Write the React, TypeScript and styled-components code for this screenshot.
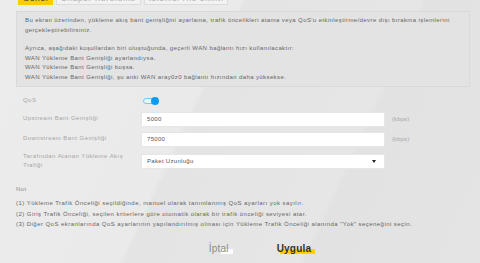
import React from "react";
import styled, { createGlobalStyle } from "styled-components";

const Global = createGlobalStyle`
  html, body { margin: 0; padding: 0; }
  body {
    width: 480px; height: 263px; overflow: hidden;
    font-family: "Liberation Sans", Arial, sans-serif;
    background: linear-gradient(115deg, #ececec 0%, #eaeaea 40%, #e4e4e4 41%, #e6e6e6 70%, #e2e2e2 71%, #e4e4e4 100%);
  }
`;

const Page = styled.div`
  width: 480px;
  height: 263px;
  overflow: hidden;
  padding: 0 10px 0 16px;
  box-sizing: border-box;
`;

const TabBar = styled.div`
  display: flex;
  align-items: flex-end;
  gap: 3px;
  margin-top: -8px;
  height: 13px;
  padding-left: 2px;
`;

const Tab = styled.div<{ $active?: boolean }>`
  height: 13px;
  padding: 0 4px;
  display: flex;
  align-items: center;
  font-size: 8px;
  letter-spacing: 0.8px;
  color: ${(p) => (p.$active ? "#333" : "#aaa")};
  background: ${(p) => (p.$active ? "#ffcc00" : "#f2f2f2")};
  border: 1px solid ${(p) => (p.$active ? "#ffcc00" : "#dcdcdc")};
  box-sizing: border-box;
`;

const InfoBox = styled.div`
  margin-top: 6px;
  background: #e3e3e3;
  border: 1px solid #d9d9d9;
  padding: 4px 8px 3px 8px;
  font-size: 6px;
  letter-spacing: 0.4px;
  line-height: 9.6px;
  color: #666;
`;

const Line = styled.div<{ $gap?: boolean }>`
  margin-top: ${(p) => (p.$gap ? "9px" : "0")};
`;

const Form = styled.div`
  margin-top: 8px;
  padding-left: 7px;
  display: grid;
  grid-template-columns: 111px 244px auto;
  column-gap: 7px;
  row-gap: 5px;
  align-items: center;
`;

const Label = styled.div`
  font-size: 6px;
  letter-spacing: 0.45px;
  line-height: 9.5px;
  color: #a6a6a6;
`;

const Toggle = styled.div`
  position: relative;
  width: 16px;
  height: 8px;
  margin: 2px 0 2px 2px;
`;

const Track = styled.div`
  position: absolute;
  left: 0;
  top: 1px;
  width: 13px;
  height: 6px;
  border-radius: 3px;
  border: 1px solid #7cc8f5;
  background: #e9f5fc;
  box-sizing: border-box;
`;

const Knob = styled.div`
  position: absolute;
  right: 0;
  top: 0;
  width: 8px;
  height: 8px;
  border-radius: 50%;
  background: #0a9cf0;
`;

const Input = styled.div`
  height: 15px;
  background: #fff;
  border: 1px solid #e6e6e6;
  box-sizing: border-box;
  display: flex;
  align-items: center;
  justify-content: space-between;
  padding: 0 8px 0 5px;
  font-size: 6px;
  letter-spacing: 0.3px;
  color: #555;
`;

const Unit = styled.div`
  font-size: 6px;
  letter-spacing: 0.1px;
  color: #a8a8a8;
`;

const Arrow = styled.span`
  width: 0;
  height: 0;
  border-left: 2.5px solid transparent;
  border-right: 2.5px solid transparent;
  border-top: 3px solid #222;
`;

const Notes = styled.div`
  margin-top: 13px;
  font-size: 6px;
  letter-spacing: 0.45px;
  line-height: 10.5px;
  color: #666;
`;

const NoteTitle = styled.div`
  color: #8a8a8a;
  margin-bottom: 4px;
`;

const Buttons = styled.div`
  margin-top: 13px;
  display: flex;
  justify-content: center;
  gap: 46px;
  padding-left: 34px;
`;

const Button = styled.div<{ $primary?: boolean }>`
  position: relative;
  font-size: 10px;
  letter-spacing: 0.2px;
  font-weight: ${(p) => (p.$primary ? 700 : 400)};
  color: ${(p) => (p.$primary ? "#333" : "#8c8c8c")};
  padding: 0 1px;
  &::after {
    content: "";
    position: absolute;
    z-index: -1;
    left: ${(p) => (p.$primary ? "4px" : "13px")};
    right: -3px;
    bottom: 0px;
    height: 5px;
    background: ${(p) => (p.$primary ? "#ffd100" : "#ffffff")};
  }
`;

const ButtonText = styled.span`
  position: relative;
`;

export default function App() {
  return (
    <>
      <Global />
      <Page>
        <TabBar>
          <Tab $active>Genel</Tab>
          <Tab>Shaper Kurulumu</Tab>
          <Tab>İstemci Hız Limiti</Tab>
        </TabBar>
        <InfoBox>
          <Line>
            Bu ekran üzerinden, yükleme akış bant genişliğini ayarlama, trafik öncelikleri atama veya QoS'u etkinleştirme/devre dışı bırakma işlemlerini
          </Line>
          <Line>gerçekleştirebilirsiniz.</Line>
          <Line $gap>
            Ayrıca, aşağıdaki koşullardan biri oluştuğunda, geçerli WAN bağlantı hızı kullanılacaktır:
          </Line>
          <Line>WAN Yükleme Bant Genişliği ayarlandıysa.</Line>
          <Line>WAN Yükleme Bant Genişliği boşsa.</Line>
          <Line>WAN Yükleme Bant Genişliği, şu anki WAN aray0z0 bağlantı hızından daha yüksekse.</Line>
        </InfoBox>
        <Form>
          <Label>QoS</Label>
          <Toggle>
            <Track />
            <Knob />
          </Toggle>
          <span />
          <Label>Upstream Bant Genişliği</Label>
          <Input>5000</Input>
          <Unit>(kbps)</Unit>
          <Label>Downstream Bant Genişliği</Label>
          <Input>75000</Input>
          <Unit>(kbps)</Unit>
          <Label>
            Tarafından Atanan Yükleme Akış
            <br />
            Trafiği
          </Label>
          <Input>
            Paket Uzunluğu
            <Arrow />
          </Input>
          <span />
        </Form>
        <Notes>
          <NoteTitle>Not</NoteTitle>
          <div>(1) Yükleme Trafik Önceliği seçildiğinde, manuel olarak tanımlanmış QoS ayarları yok sayılır.</div>
          <div>(2) Giriş Trafik Önceliği, seçilen kriterlere göre otomatik olarak bir trafik önceliği seviyesi atar.</div>
          <div>(3) Diğer QoS ekranlarında QoS ayarlarının yapılandırılmış olması için Yükleme Trafik Önceliği alanında "Yok" seçeneğini seçin.</div>
        </Notes>
        <Buttons>
          <Button>
            <ButtonText>İptal</ButtonText>
          </Button>
          <Button $primary>
            <ButtonText>Uygula</ButtonText>
          </Button>
        </Buttons>
      </Page>
    </>
  );
}
